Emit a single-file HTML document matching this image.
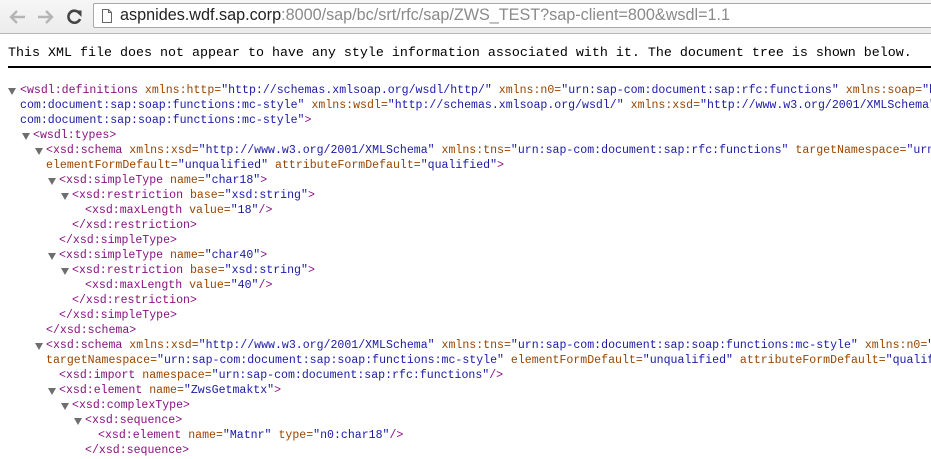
<!DOCTYPE html>
<html><head><meta charset="utf-8"><style>
html,body{margin:0;padding:0;width:931px;height:459px;overflow:hidden;background:#fff;}
#wrap{position:absolute;left:0;top:0;width:931px;height:459px;overflow:hidden;}
#bar{position:absolute;left:0;top:0;width:931px;height:33px;background:linear-gradient(#f6f6f6,#ececec);border-bottom:1px solid #b8b8b8;overflow:hidden;}
#addr{position:absolute;left:93px;top:3px;width:850px;height:25px;background:#fff;border:1px solid #a9a9a9;border-radius:2px;box-sizing:border-box;}
#url{position:absolute;left:120px;top:5px;font:16.2px "Liberation Sans",sans-serif;color:#8a8a8a;white-space:nowrap;line-height:20px;}
#url b{font-weight:normal;color:#222;}
#info{position:absolute;left:8px;top:45px;font:13.33px "Liberation Mono",monospace;color:#000;white-space:pre;line-height:17px;}
#hr{position:absolute;left:8px;top:66px;width:923px;height:2px;background:#000;}
.l{position:absolute;white-space:pre;font:11.57px "Liberation Mono",monospace;line-height:15px;height:15px;color:#881280;max-width:931px;}
.a{color:#994500}.v{color:#1a1aa6}
.t{position:absolute;width:0;height:0;border-left:4px solid transparent;border-right:4px solid transparent;border-top:7px solid #6e6e6e;}
</style></head><body><div id="wrap">
<div id="bar">
<svg style="position:absolute;left:8px;top:8px" width="80" height="18" viewBox="0 0 80 18">
<path d="M17 9H3M9 3L3 9L9 15" stroke="#b5b5b5" stroke-width="2.4" fill="none"/>
<path d="M30 9H44M38 3L44 9L38 15" stroke="#b5b5b5" stroke-width="2.4" fill="none"/>
<path d="M71.5 5.5A6 6 0 1 0 72 11" stroke="#444" stroke-width="2.6" fill="none"/>
<path d="M67 2.5L73.5 2.5L73.5 9Z" fill="#444"/>
</svg>
<div id="addr"></div>
<svg style="position:absolute;left:101px;top:8px" width="12" height="16" viewBox="0 0 12 16"><path d="M1.5 1.5H7.5L10.5 4.5V14.5H1.5Z M7.5 1.5V4.5H10.5" stroke="#666" fill="#fff"/></svg>
<div id="url"><b>aspnides.wdf.sap.corp</b>:8000/sap/bc/srt/rfc/sap/ZWS_TEST?sap-client=800&amp;wsdl=1.1</div>
</div>
<div id="info">This XML file does not appear to have any style information associated with it. The document tree is shown below.</div>
<div id="hr"></div>

<div class="t" style="left:8px;top:88px"></div>
<div class="l" style="left:20px;top:83px">&lt;wsdl:definitions <span class="a">xmlns:http=</span><span class="v">"http://schemas.xmlsoap.org/wsdl/http/"</span> <span class="a">xmlns:n0=</span><span class="v">"urn:sap-com:document:sap:rfc:functions"</span> <span class="a">xmlns:soap=</span><span class="v">"http://schemas.xmlsoap.org/wsdl/soap/"</span></div>
<div class="l" style="left:20px;top:98px"><span class="v">com:document:sap:soap:functions:mc-style"</span> <span class="a">xmlns:wsdl=</span><span class="v">"http://schemas.xmlsoap.org/wsdl/"</span> <span class="a">xmlns:xsd=</span><span class="v">"http://www.w3.org/2001/XMLSchema"</span></div>
<div class="l" style="left:20px;top:113px"><span class="v">com:document:sap:soap:functions:mc-style"</span>&gt;</div>

<div class="t" style="left:22px;top:133px"></div>
<div class="l" style="left:33px;top:128px">&lt;wsdl:types&gt;</div>
<div class="t" style="left:35px;top:148px"></div>
<div class="l" style="left:46px;top:143px">&lt;xsd:schema <span class="a">xmlns:xsd=</span><span class="v">"http://www.w3.org/2001/XMLSchema"</span> <span class="a">xmlns:tns=</span><span class="v">"urn:sap-com:document:sap:rfc:functions"</span> <span class="a">targetNamespace=</span><span class="v">"urn:sap-com:document:sap:rfc:functions"</span></div>
<div class="l" style="left:46px;top:158px"><span class="a">elementFormDefault=</span><span class="v">"unqualified"</span> <span class="a">attributeFormDefault=</span><span class="v">"qualified"</span>&gt;</div>
<div class="t" style="left:48px;top:178px"></div>
<div class="l" style="left:59px;top:173px">&lt;xsd:simpleType <span class="a">name=</span><span class="v">"char18"</span>&gt;</div>
<div class="t" style="left:61px;top:193px"></div>
<div class="l" style="left:72px;top:188px">&lt;xsd:restriction <span class="a">base=</span><span class="v">"xsd:string"</span>&gt;</div>
<div class="l" style="left:85px;top:203px">&lt;xsd:maxLength <span class="a">value=</span><span class="v">"18"</span>/&gt;</div>
<div class="l" style="left:72px;top:218px">&lt;/xsd:restriction&gt;</div>
<div class="l" style="left:59px;top:233px">&lt;/xsd:simpleType&gt;</div>
<div class="t" style="left:48px;top:253px"></div>
<div class="l" style="left:59px;top:248px">&lt;xsd:simpleType <span class="a">name=</span><span class="v">"char40"</span>&gt;</div>
<div class="t" style="left:61px;top:268px"></div>
<div class="l" style="left:72px;top:263px">&lt;xsd:restriction <span class="a">base=</span><span class="v">"xsd:string"</span>&gt;</div>
<div class="l" style="left:85px;top:278px">&lt;xsd:maxLength <span class="a">value=</span><span class="v">"40"</span>/&gt;</div>
<div class="l" style="left:72px;top:293px">&lt;/xsd:restriction&gt;</div>
<div class="l" style="left:59px;top:308px">&lt;/xsd:simpleType&gt;</div>
<div class="l" style="left:46px;top:323px">&lt;/xsd:schema&gt;</div>
<div class="t" style="left:35px;top:343px"></div>
<div class="l" style="left:46px;top:338px">&lt;xsd:schema <span class="a">xmlns:xsd=</span><span class="v">"http://www.w3.org/2001/XMLSchema"</span> <span class="a">xmlns:tns=</span><span class="v">"urn:sap-com:document:sap:soap:functions:mc-style"</span> <span class="a">xmlns:n0=</span><span class="v">"urn:sap-com:document:sap:rfc:functions"</span></div>
<div class="l" style="left:46px;top:353px"><span class="a">targetNamespace=</span><span class="v">"urn:sap-com:document:sap:soap:functions:mc-style"</span> <span class="a">elementFormDefault=</span><span class="v">"unqualified"</span> <span class="a">attributeFormDefault=</span><span class="v">"qualified"</span>&gt;</div>
<div class="l" style="left:59px;top:368px">&lt;xsd:import <span class="a">namespace=</span><span class="v">"urn:sap-com:document:sap:rfc:functions"</span>/&gt;</div>
<div class="t" style="left:48px;top:388px"></div>
<div class="l" style="left:59px;top:383px">&lt;xsd:element <span class="a">name=</span><span class="v">"ZwsGetmaktx"</span>&gt;</div>
<div class="t" style="left:61px;top:403px"></div>
<div class="l" style="left:72px;top:398px">&lt;xsd:complexType&gt;</div>
<div class="t" style="left:74px;top:418px"></div>
<div class="l" style="left:85px;top:413px">&lt;xsd:sequence&gt;</div>
<div class="l" style="left:98px;top:428px">&lt;xsd:element <span class="a">name=</span><span class="v">"Matnr"</span> <span class="a">type=</span><span class="v">"n0:char18"</span>/&gt;</div>
<div class="l" style="left:85px;top:443px">&lt;/xsd:sequence&gt;</div>
</div></body></html>
